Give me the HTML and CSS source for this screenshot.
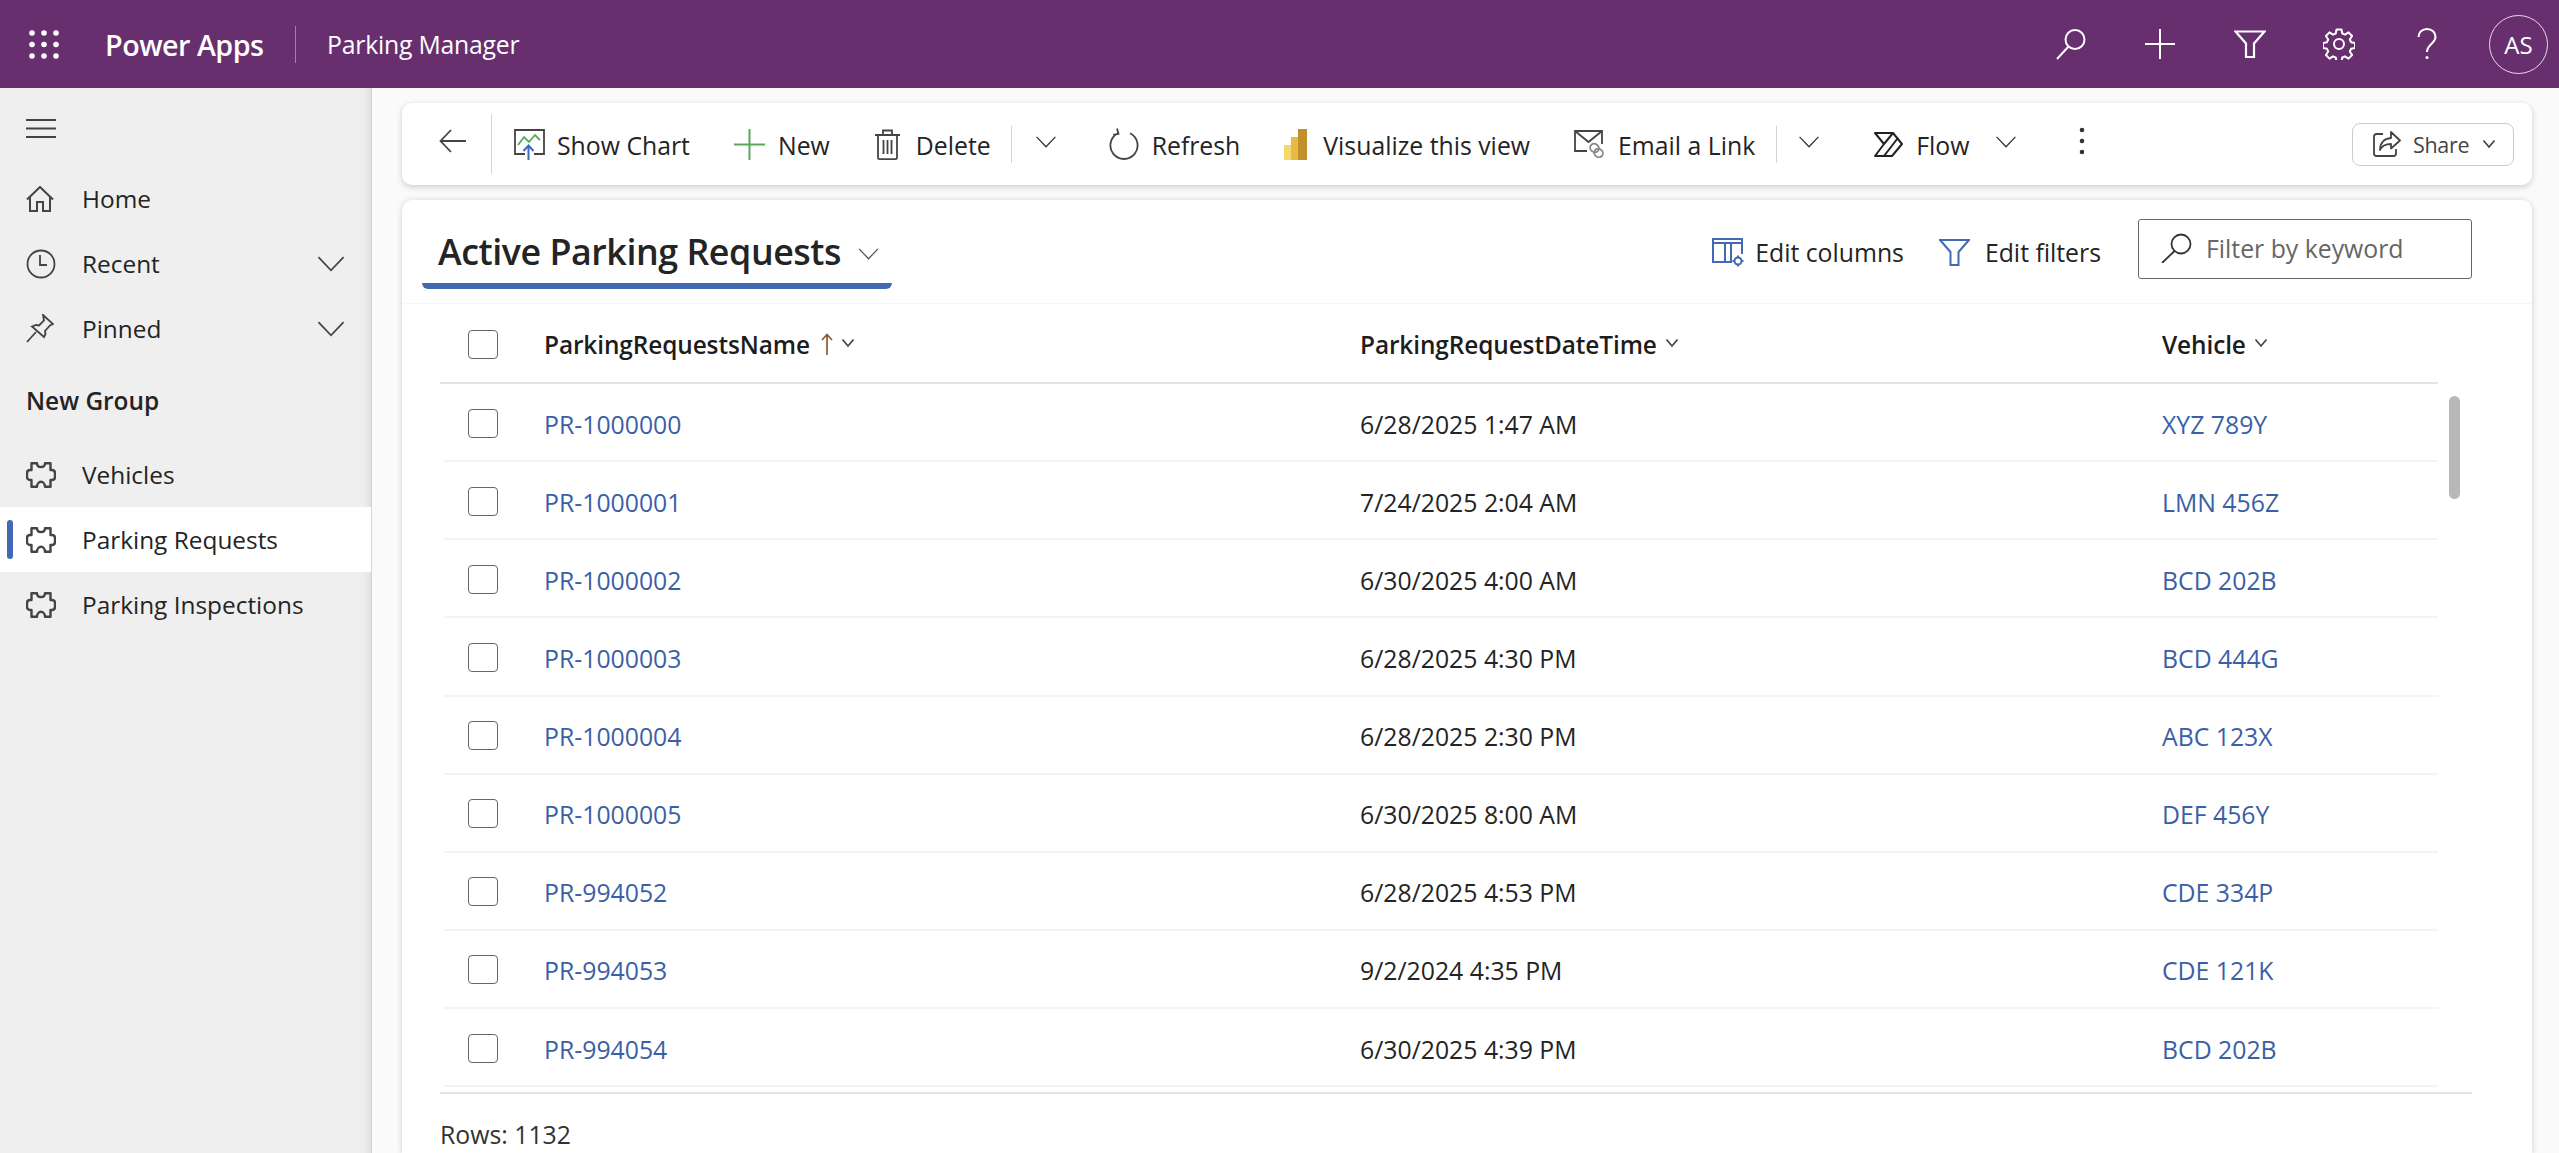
FILE: index.html
```html
<!DOCTYPE html>
<html lang="en">
<head>
    <meta charset="UTF-8">
    <title>Parking Manager</title>
    <link rel="stylesheet" href="styles.css">
</head>
<body>
    <svg class="defs" width="0" height="0">
        <symbol id="puzzle" viewBox="0 0 30 26">
            <path d="M5.500 1.200H11c0 2.800 2 3.800 4 3.800s4-1 4-3.800h5.500V8H26c1.800 0 3 1.500 3 3.200v3.500c0 1.800-1.200 3.300-3 3.300h-1.500v6.800H19c0-3-2-5-4-5s-4 2-4 5H5.500V18H4c-1.800 0-3-1.500-3-3.300v-3.500C1 9.500 2.200 8 4 8h1.500z" fill="none" stroke="currentColor" stroke-width="2.400" stroke-linejoin="round"/>
        </symbol>
        <symbol id="chev" viewBox="0 0 24 14">
            <path d="M1 1l11 11.500L23 1" fill="none" stroke="currentColor" stroke-width="1.500"/>
        </symbol>
        <symbol id="chev-small" viewBox="0 0 14 10">
            <path d="M1.500 1.500L7 8l5.500-6.500" fill="none" stroke="currentColor" stroke-width="1.700"/>
        </symbol>
    </svg>

    <header class="topbar">
        <svg class="waffle" width="30" height="29" viewBox="0 0 30 29" fill="#fff">
            <circle cx="3" cy="3" r="2.800"/><circle cx="15" cy="3" r="2.800"/><circle cx="27" cy="3" r="2.800"/>
            <circle cx="3" cy="14.500" r="2.800"/><circle cx="15" cy="14.500" r="2.800"/><circle cx="27" cy="14.500" r="2.800"/>
            <circle cx="3" cy="26" r="2.800"/><circle cx="15" cy="26" r="2.800"/><circle cx="27" cy="26" r="2.800"/>
        </svg>
        <span class="brand">Power Apps</span>
        <span class="brand-sep"></span>
        <span class="app-name">Parking Manager</span>
        <div class="topbar-icons">
            <svg width="32" height="32" viewBox="0 0 32 32" fill="none" stroke="#fff" stroke-width="2"><circle cx="20" cy="11.500" r="9.500"/><path d="M13.500 18.500L2 31"/></svg>
            <svg width="32" height="32" viewBox="0 0 32 32" fill="none" stroke="#fff" stroke-width="2"><path d="M16 1v30M1 16h30"/></svg>
            <svg width="32" height="28" viewBox="0 0 32 28" fill="none" stroke="#fff" stroke-width="2.200"><path d="M1.500 1.500h29L20 13.500V27h-8V13.500z"/></svg>
            <svg width="32" height="32" viewBox="0 0 32 32" fill="none" stroke="#fff" stroke-width="2"><circle cx="16" cy="16" r="5"/><path d="M13.500 1.500h5l.8 4 2.700 1.200 3.500-2.300 3.600 3.600-2.300 3.500 1.200 2.700 4 .8v5l-4 .8-1.200 2.700 2.300 3.500-3.600 3.600-3.500-2.300-2.700 1.200-.8 4h-5l-.8-4-2.700-1.200-3.500 2.300-3.600-3.600 2.300-3.500-1.200-2.700-4-.8v-5l4-.8 1.200-2.700-2.300-3.500 3.600-3.600 3.500 2.300 2.700-1.200z" stroke-linejoin="round"/></svg>
            <svg width="20" height="32" viewBox="0 0 20 32" fill="none" stroke="#fff" stroke-width="2"><path d="M1.500 9C1.500 4.500 5 1 10 1s8.500 3.500 8.500 8c0 6.500-8.500 7-8.500 15"/><circle cx="10" cy="29.500" r="1.500" fill="#fff" stroke="none"/></svg>
            <span class="avatar">AS</span>
        </div>
    </header>

    <div class="layout">
        <nav class="sidebar">
            <svg class="hamburger" width="30" height="19" viewBox="0 0 30 19" stroke="#444" stroke-width="2"><path d="M0 1h30M0 9.500h30M0 18h30"/></svg>
            <a class="nav-item">
                <svg class="nav-icon" width="28" height="26" viewBox="0 0 28 26" fill="none" stroke="#444" stroke-width="2"><path d="M1 13.500L14 1l13 12.500M4 10.500V25h7v-9h6v9h7V10.500"/></svg>
                <span>Home</span>
            </a>
            <a class="nav-item">
                <svg class="nav-icon" width="30" height="30" viewBox="0 0 30 30" fill="none" stroke="#444" stroke-width="1.800"><circle cx="15" cy="15" r="13.500"/><path d="M14 6v10h7"/></svg>
                <span>Recent</span>
                <svg class="nav-chev"><use href="#chev"/></svg>
            </a>
            <a class="nav-item">
                <svg class="nav-icon" width="28" height="30" viewBox="0 0 28 30" fill="none" stroke="#444" stroke-width="1.800"><path d="M1 28l9-10M17 1l10 9-3 1.500-5 5.500.5 3-1.500 3L6 12.500l4-1.500 3 .5 5-5z"/></svg>
                <span>Pinned</span>
                <svg class="nav-chev"><use href="#chev"/></svg>
            </a>
            <div class="nav-group">New Group</div>
            <a class="nav-item">
                <svg class="nav-icon" width="30" height="26"><use href="#puzzle"/></svg>
                <span>Vehicles</span>
            </a>
            <a class="nav-item selected">
                <svg class="nav-icon" width="30" height="26"><use href="#puzzle"/></svg>
                <span>Parking Requests</span>
            </a>
            <a class="nav-item">
                <svg class="nav-icon" width="30" height="26"><use href="#puzzle"/></svg>
                <span>Parking Inspections</span>
            </a>
        </nav>

        <main class="main">
            <div class="toolbar">
                <button class="tb-back">
                    <svg width="27" height="24" viewBox="0 0 27 24" fill="none" stroke="#444" stroke-width="1.800"><path d="M12 1L1.500 12 12 23M1.500 12H27"/></svg>
                </button>
                <span class="tb-sep tall"></span>
                <button class="tb-btn chart">
                    <svg width="31" height="31" viewBox="0 0 31 31" fill="none"><path d="M11 25H1V1h29v24H20" stroke="#444" stroke-width="1.800"/><path d="M4 14l6-8 5 5 6-7 5 5" stroke="#5aa75a" stroke-width="1.800" transform="translate(0 2)"/><path d="M14.500 31V17M9.500 22l5-5.500 5 5.500" stroke="#3f6bb8" stroke-width="2"/></svg>
                    <span>Show Chart</span>
                </button>
                <button class="tb-btn new">
                    <svg width="31" height="31" viewBox="0 0 31 31" stroke="#5aa75a" stroke-width="2"><path d="M15.500 0v31M0 15.500h31"/></svg>
                    <span>New</span>
                </button>
                <button class="tb-btn delete">
                    <svg width="25" height="31" viewBox="0 0 25 31" fill="none" stroke="#444" stroke-width="1.800"><path d="M0 6h25M8 6V1.500h9V6M3 6v22.500c0 1 .6 1.600 1.600 1.600h15.800c1 0 1.600-.6 1.600-1.600V6M8.500 11v14M12.500 11v14M16.500 11v14"/></svg>
                    <span>Delete</span>
                </button>
                <span class="tb-sep"></span>
                <svg class="tb-chev first"><use href="#chev"/></svg>
                <button class="tb-btn refresh">
                    <svg width="30" height="32" viewBox="0 0 30 32" fill="none" stroke="#444" stroke-width="1.800"><path d="M9 5.200A13.600 13.600 0 1 0 21 5.200M8 .5l1.500 5.300-5.300 1"/></svg>
                    <span>Refresh</span>
                </button>
                <button class="tb-btn visualize">
                    <svg width="23" height="31" viewBox="0 0 23 31"><rect x="0" y="16" width="9" height="15" fill="#f2d96b"/><rect x="7" y="8" width="8" height="23" fill="#e6bb45"/><rect x="14" y="0" width="9" height="31" fill="#c1902b"/></svg>
                    <span>Visualize this view</span>
                </button>
                <button class="tb-btn email">
                    <svg width="31" height="28" viewBox="0 0 31 28" fill="none" stroke="#444" stroke-width="1.800"><path d="M13 21H1V1h27v13M1 1l13.500 11L28 1"/><g stroke="#888"><rect x="16" y="14" width="9" height="8" rx="4" transform="rotate(40 20.500 18)"/><rect x="20" y="19" width="9" height="8" rx="4" transform="rotate(40 24.500 23)"/></g></svg>
                    <span>Email a Link</span>
                </button>
                <span class="tb-sep second"></span>
                <svg class="tb-chev second"><use href="#chev"/></svg>
                <button class="tb-btn flow">
                    <svg width="30" height="27" viewBox="0 0 30 27" fill="none" stroke="#222" stroke-width="2" stroke-linejoin="round"><path d="M2 2h18l9 11-10 12H2l9-12z"/><path d="M20 2L11 13M24.500 7.500L11 25"/></svg>
                    <span>Flow</span>
                </button>
                <svg class="tb-chev third"><use href="#chev"/></svg>
                <svg class="tb-dots" width="6" height="28" viewBox="0 0 6 28" fill="#333"><circle cx="3" cy="3" r="2.300"/><circle cx="3" cy="14" r="2.300"/><circle cx="3" cy="25" r="2.300"/></svg>
                <button class="share">
                    <svg width="28" height="26" viewBox="0 0 28 26" fill="none" stroke="#444" stroke-width="1.800"><path d="M10 3H3.500C2 3 1 4 1 5.500v17C1 24 2 25 3.500 25h17c1.500 0 2.500-1 2.500-2.500V18"/><path d="M18 1l9 8.500-9 8V13c-5 0-9 1.500-11 6 0-7 4-11.500 11-12z" stroke-linejoin="round"/></svg>
                    <span>Share</span>
                    <svg class="share-chev"><use href="#chev-small"/></svg>
                </button>
            </div>

            <section class="card">
                <div class="view-head">
                    <div class="view-title">
                        <h1>Active Parking Requests</h1>
                        <svg class="view-chev"><use href="#chev"/></svg>
                    </div>
                    <div class="view-tools">
                        <a class="view-tool cols">
                            <svg width="32" height="29" viewBox="0 0 32 29" fill="none" stroke="#4369b5" stroke-width="2"><path d="M1 1h29v4H1zM1 5v19h12V5M13 24h6V5M19 16V5h11v11"/><circle cx="26" cy="23" r="3.500"/><path d="M26 17.500v2M26 26.500v2M20.500 23h2M29.500 23h2"/></svg>
                            <span>Edit columns</span>
                        </a>
                        <a class="view-tool filters">
                            <svg width="31" height="27" viewBox="0 0 31 27" fill="none" stroke="#4369b5" stroke-width="2"><path d="M1 1h29L19.500 13v13h-8V13z"/></svg>
                            <span>Edit filters</span>
                        </a>
                        <div class="keyword">
                            <svg width="32" height="30" viewBox="0 0 32 30" fill="none" stroke="#333" stroke-width="1.800"><circle cx="20" cy="11" r="9.500"/><path d="M13.500 18L1 30"/></svg>
                            <span>Filter by keyword</span>
                        </div>
                    </div>
                </div>

                <div class="grid">
                    <div class="grid-head">
                        <span class="check head-check"></span>
                        <div class="col-name">ParkingRequestsName
                            <svg class="sort-arrow" width="12" height="22" viewBox="0 0 12 22" fill="none" stroke="#8c5a36" stroke-width="1.700"><path d="M6 22V2M1 7l5-5.500L11 7"/></svg>
                            <svg class="head-chev"><use href="#chev-small"/></svg>
                        </div>
                        <div class="col-name">ParkingRequestDateTime
                            <svg class="head-chev"><use href="#chev-small"/></svg>
                        </div>
                        <div class="col-name">Vehicle
                            <svg class="head-chev"><use href="#chev-small"/></svg>
                        </div>
                    </div>

                    <div class="grid-row"><span class="check"></span><a class="link">PR-1000000</a><span class="cell">6/28/2025 1:47 AM</span><a class="link">XYZ 789Y</a></div>
                    <div class="grid-row"><span class="check"></span><a class="link">PR-1000001</a><span class="cell">7/24/2025 2:04 AM</span><a class="link">LMN 456Z</a></div>
                    <div class="grid-row"><span class="check"></span><a class="link">PR-1000002</a><span class="cell">6/30/2025 4:00 AM</span><a class="link">BCD 202B</a></div>
                    <div class="grid-row"><span class="check"></span><a class="link">PR-1000003</a><span class="cell">6/28/2025 4:30 PM</span><a class="link">BCD 444G</a></div>
                    <div class="grid-row"><span class="check"></span><a class="link">PR-1000004</a><span class="cell">6/28/2025 2:30 PM</span><a class="link">ABC 123X</a></div>
                    <div class="grid-row"><span class="check"></span><a class="link">PR-1000005</a><span class="cell">6/30/2025 8:00 AM</span><a class="link">DEF 456Y</a></div>
                    <div class="grid-row"><span class="check"></span><a class="link">PR-994052</a><span class="cell">6/28/2025 4:53 PM</span><a class="link">CDE 334P</a></div>
                    <div class="grid-row"><span class="check"></span><a class="link">PR-994053</a><span class="cell">9/2/2024 4:35 PM</span><a class="link">CDE 121K</a></div>
                    <div class="grid-row"><span class="check"></span><a class="link">PR-994054</a><span class="cell">6/30/2025 4:39 PM</span><a class="link">BCD 202B</a></div>

                    <div class="scroll-thumb"></div>
                </div>

                <div class="grid-foot">Rows: 1132</div>
            </section>
        </main>
    </div>
</body>
</html>
```

FILE: styles.css
```css
* {
    box-sizing: border-box;
}
html, body {
    height: 100%;
}
body {
    margin: 0;
    font-family: "Open Sans", "Noto Sans", sans-serif;
    font-size: 24.8px;
    color: #242424;
    background: #fafafa;
    overflow: hidden;
}
button {
    font: inherit;
    color: inherit;
    background: none;
    border: none;
    padding: 0;
    display: flex;
    align-items: center;
}
.defs {
    position: absolute;
}

/* top bar */
.topbar {
    height: 88px;
    background: #682f6f;
    color: white;
    display: flex;
    align-items: center;
    padding-left: 29px;
}
.waffle {
    margin-right: 46px;
}
.brand {
    font-size: 28.7px;
    font-weight: 600;
    letter-spacing: -0.5px;
    width: 190px;
}
.brand-sep {
    width: 1px;
    height: 37px;
    background: #a27fa7;
    margin-right: 31px;
}
.app-name {
    font-size: 24.75px;
    letter-spacing: -0.2px;
}
.topbar-icons {
    margin-left: auto;
    display: flex;
    align-items: center;
    padding-right: 11px;
}
.topbar-icons svg:nth-child(1) { margin-right: 57px; }
.topbar-icons svg:nth-child(2) { margin-right: 58px; }
.topbar-icons svg:nth-child(3) { margin-right: 57px; }
.topbar-icons svg:nth-child(4) { margin-right: 62px; }
.topbar-icons svg:nth-child(5) { margin-right: 52px; }
.avatar {
    width: 59px;
    height: 59px;
    border: 1.5px solid #e8dcea;
    border-radius: 50%;
    font-size: 24px;
    display: flex;
    align-items: center;
    justify-content: center;
}

/* layout */
.layout {
    display: flex;
    height: calc(100% - 88px);
}
.sidebar {
    width: 372px;
    flex-shrink: 0;
    background: #efefef;
    border-right: 1px solid #d4d4d4;
    box-shadow: inset -14px 0 12px -14px rgba(0, 0, 0, 0.12);
    padding-top: 31px;
}
.hamburger {
    display: block;
    margin: 0 0 28px 26px;
}
.nav-item {
    display: flex;
    align-items: center;
    height: 65px;
    padding-left: 26px;
    position: relative;
    font-size: 24.4px;
}
.nav-icon {
    color: #444;
    flex-shrink: 0;
}
.nav-item span {
    position: absolute;
    left: 82px;
}
.nav-chev {
    position: absolute;
    left: 316px;
    width: 30px;
    height: 16px;
    color: #444;
}
.nav-group {
    height: 81px;
    display: flex;
    align-items: center;
    padding: 0 0 2px 26px;
    font-size: 24.4px;
    font-weight: 600;
}
.nav-item.selected {
    background: white;
}
.nav-item.selected::before {
    content: "";
    position: absolute;
    left: 7px;
    top: 13px;
    width: 6px;
    height: 39px;
    border-radius: 3px;
    background: #4369b5;
}

/* main */
.main {
    flex: 1;
    min-width: 0;
    padding: 15px 27px 0 30px;
    display: flex;
    flex-direction: column;
}

/* command bar */
.toolbar {
    height: 82px;
    flex-shrink: 0;
    margin-bottom: 15px;
    background: white;
    border-radius: 10px;
    box-shadow: 0 2px 6px rgba(0, 0, 0, 0.18);
    display: flex;
    align-items: center;
    padding-left: 37px;
}
.tb-back {
    width: 52px;
    margin-top: -6px;
}
.tb-sep {
    width: 1px;
    height: 37px;
    background: #d4d4d4;
}
.tb-sep.tall {
    height: 60px;
    margin-right: 22px;
}
.tb-btn {
    gap: 13px;
}
.tb-btn span {
    margin-top: 2px;
}
.tb-btn.chart { margin-right: 44px; gap: 12px; }
.tb-btn.new { margin-right: 45px; }
.tb-btn.delete { margin-right: 20px; gap: 16px; }
.tb-btn.refresh { margin-right: 44px; }
.tb-btn.visualize { margin-right: 44px; gap: 16px; }
.tb-btn.email { margin-right: 21px; }
.tb-btn.flow { margin-right: 26px; }
.tb-chev {
    width: 22px;
    height: 12px;
    color: #333;
    margin-top: -4px;
}
.tb-chev.first {
    margin: -4px 52px 0 23px;
}
.tb-chev.second {
    margin: -4px 53px 0 21px;
}
.tb-chev.third {
    margin: -4px 62px 0 0;
}
.tb-dots {
    margin-top: -6px;
}
.share {
    margin-left: auto;
    margin-right: 18px;
    width: 162px;
    height: 43px;
    border: 1px solid #cccccc;
    border-radius: 8px;
    padding-left: 20px;
    gap: 12px;
    font-size: 21.5px;
    color: #444;
    letter-spacing: -0.3px;
}
.share-chev {
    width: 14px;
    height: 10px;
    margin-left: 1px;
}

/* view card */
.card {
    flex: 1;
    background: white;
    border-radius: 10px 10px 0 0;
    box-shadow: 0 1px 6px rgba(0, 0, 0, 0.18);
    display: flex;
    flex-direction: column;
    min-height: 0;
}
.view-head {
    height: 104px;
    flex-shrink: 0;
    border-bottom: 1px solid #f6f6f6;
    display: flex;
    padding-left: 20px;
    position: relative;
}
.view-title {
    height: 89px;
    width: 470px;
    display: flex;
    align-items: center;
    padding: 21px 0 0 16px;
    border-bottom: 6px solid #4369b5;
    border-radius: 0 0 6px 6px;
}
.view-title h1 {
    margin: 0;
    font-size: 35.8px;
    font-weight: 600;
    letter-spacing: -0.45px;
    line-height: 1;
}
.view-chev {
    width: 21px;
    height: 12px;
    color: #555;
    margin-left: 17px;
    margin-top: 4px;
}
.view-tools {
    margin-left: auto;
    display: flex;
    align-items: flex-start;
    padding-right: 60px;
}
.view-tool {
    display: flex;
    align-items: center;
    gap: 11px;
    margin-top: 35px;
}
.view-tool.cols { margin-right: 35px; }
.view-tool.filters { margin-right: 37px; gap: 15px; }
.keyword {
    width: 334px;
    height: 60px;
    margin-top: 19px;
    border: 1.5px solid #666;
    border-radius: 3px;
    display: flex;
    align-items: center;
    padding: 0 0 2px 22px;
    gap: 13px;
    color: #666;
}

/* grid */
.grid {
    flex: 1;
    position: relative;
    min-height: 0;
    padding-left: 38px;
}
.grid-head, .grid-row {
    display: grid;
    grid-template-columns: 104px 816px 802px 1fr;
    align-items: center;
    width: 1998px;
}
.grid-head {
    height: 80px;
    padding-top: 2px;
    border-bottom: 2px solid #e4e4e4;
    font-weight: 600;
    color: #1d1d1d;
}
.grid-row {
    height: 78.13px;
    padding-top: 2px;
    border-bottom: 2px solid #f4f4f4;
    margin-left: 4px;
    width: 1994px;
    grid-template-columns: 100px 816px 802px 1fr;
}
.check {
    width: 30px;
    height: 29px;
    border: 1.5px solid #666;
    border-radius: 4px;
    margin-left: 24px;
}
.head-check {
    margin-left: 28px;
}
.col-name {
    display: flex;
    align-items: center;
    font-size: 24.4px;
    letter-spacing: -0.1px;
}
.sort-arrow {
    margin-left: 11px;
}
.head-chev {
    width: 14px;
    height: 10px;
    margin-left: 8px;
    margin-top: -2px;
    color: #444;
}
.link, .cell {
    padding-top: 1px;
}
.link {
    color: #3b5fa6;
}
.scroll-thumb {
    position: absolute;
    left: 2047px;
    top: 92px;
    width: 11px;
    height: 103px;
    border-radius: 6px;
    background: #b8b8b8;
}
.grid-foot {
    margin: 0 60px 0 38px;
    border-top: 2px solid #e4e4e4;
    height: 61px;
    flex-shrink: 0;
    padding-top: 21px;
    display: flex;
    align-items: center;
    color: #333;
}
```
